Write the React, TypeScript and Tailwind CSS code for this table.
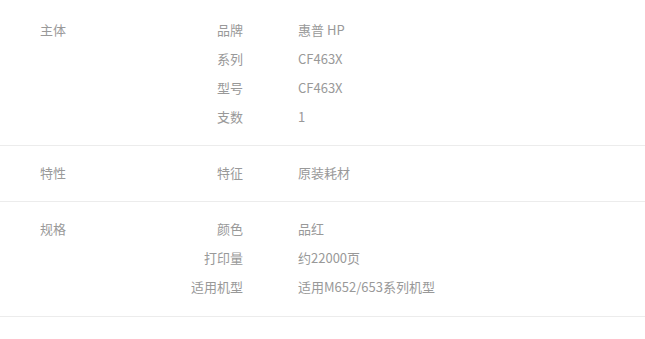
type Row = { label: string; value: string };
type Group = { name: string; rows: Row[] };

const groups: Group[] = [
  {
    name: '主体',
    rows: [
      { label: '品牌', value: '惠普 HP' },
      { label: '系列', value: 'CF463X' },
      { label: '型号', value: 'CF463X' },
      { label: '支数', value: '1' },
    ],
  },
  {
    name: '特性',
    rows: [{ label: '特征', value: '原装耗材' }],
  },
  {
    name: '规格',
    rows: [
      { label: '颜色', value: '品红' },
      { label: '打印量', value: '约22000页' },
      { label: '适用机型', value: '适用M652/653系列机型' },
    ],
  },
];

export default function App() {
  return (
    <div
      className="w-[645px] h-[339px] bg-white text-[13px] text-[#999] pt-[3px]"
      style={{ fontFamily: '"Noto Sans CJK SC", "Liberation Sans", sans-serif' }}
    >
      {groups.map((group, gi) => (
        <div
          key={group.name}
          className={
            gi === 2
              ? 'flex pl-[40px] pt-[13px] pb-[14px] border-b border-[#ececec]'
              : 'flex pl-[40px] py-[13px] border-b border-[#ececec]'
          }
        >
          <div className="w-[120px] h-[29px] leading-[27px]">{group.name}</div>
          <div className="flex flex-col">
            {group.rows.map((row) => (
              <div key={row.label} className="flex h-[29px] leading-[27px]">
                <div className="w-[83px] text-right">{row.label}</div>
                <div className="ml-[55px]">{row.value}</div>
              </div>
            ))}
          </div>
        </div>
      ))}
    </div>
  );
}
